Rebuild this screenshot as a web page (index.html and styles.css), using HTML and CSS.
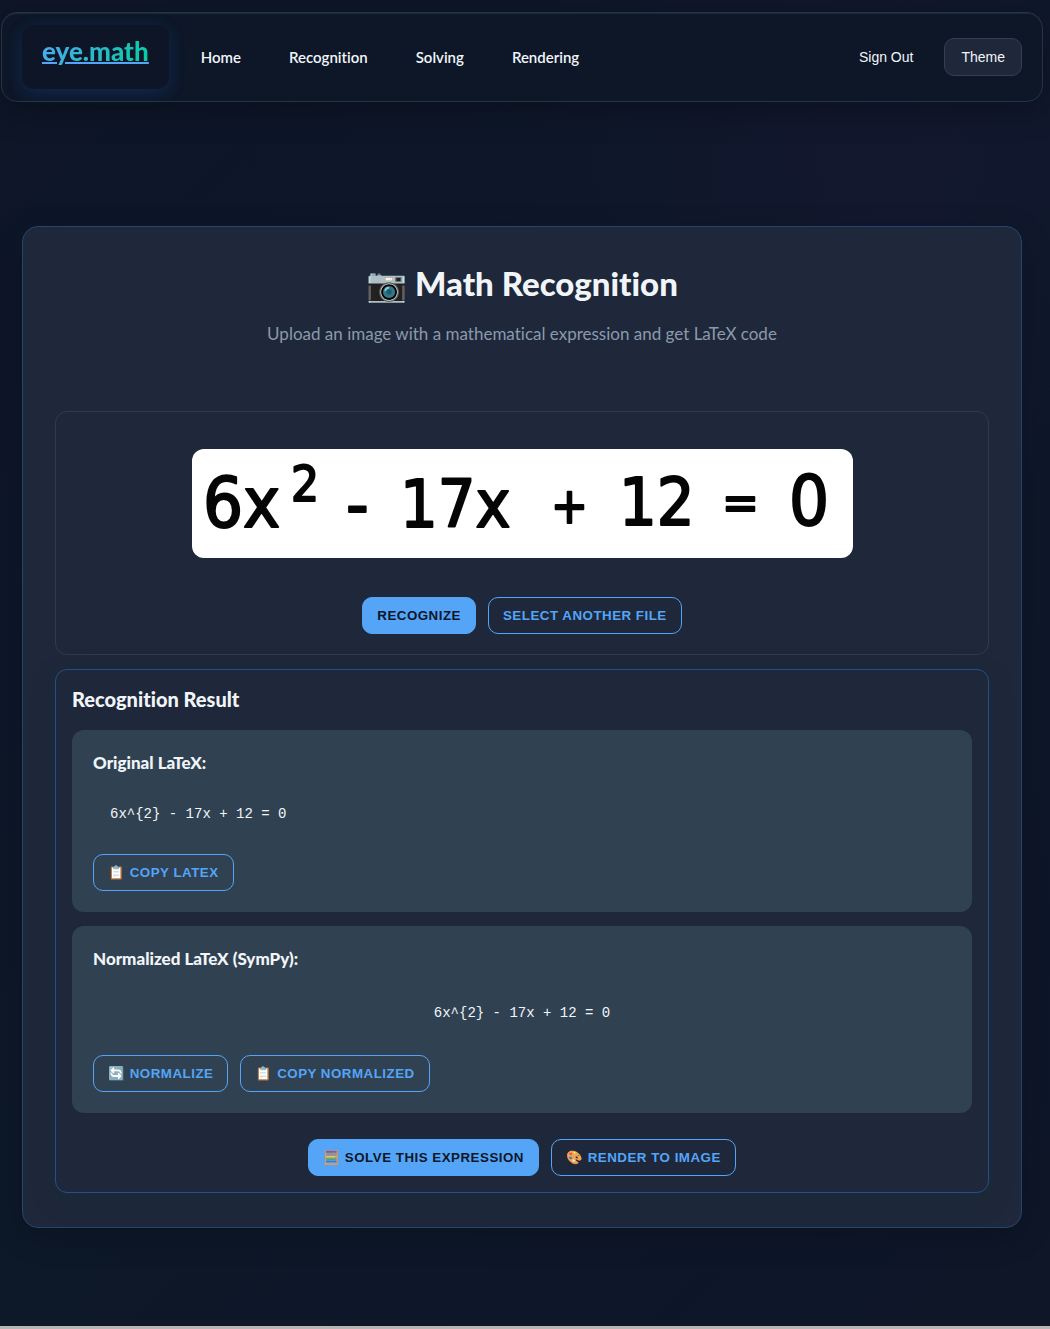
FILE: index.html
```html
<!DOCTYPE html>
<html lang="en">
<head>
  <meta charset="utf-8">
  <meta name="viewport" content="width=device-width, initial-scale=1">
  <title>eye.math – Math Recognition</title>
  <link rel="stylesheet" href="styles.css">
</head>
<body>
  <header class="navbar">
    <a class="brand" href="#"><span class="brand-text">eye.math</span></a>
    <nav class="nav-links" aria-label="Main">
      <a href="#">Home</a>
      <a href="#">Recognition</a>
      <a href="#">Solving</a>
      <a href="#">Rendering</a>
    </nav>
    <div class="nav-actions">
      <button class="nav-btn" type="button">Sign Out</button>
      <button class="nav-btn nav-btn-filled" type="button">Theme</button>
    </div>
  </header>

  <main class="card">
    <div class="card-header">
      <h1>📷 Math Recognition</h1>
      <p>Upload an image with a mathematical expression and get LaTeX code</p>
    </div>

    <section class="upload" aria-label="Uploaded image">
      <svg class="preview" viewBox="0 0 661 109" role="img" aria-label="6x² - 17x + 12 = 0">
        <g class="ink">
          <text x="11" y="78">6x</text>
          <text class="ink-sup" x="99" y="52">2</text>
          <text x="154" y="79">-</text>
          <text class="ink-narrow" x="208" y="78">17x</text>
          <text class="ink-sign" x="359" y="74">+</text>
          <text class="ink-narrow" x="427" y="76">12</text>
          <text class="ink-sign" x="530" y="71">=</text>
          <text x="597" y="76">0</text>
        </g>
      </svg>
      <div class="actions centered">
        <button class="btn btn-primary" type="button">Recognize</button>
        <button class="btn" type="button">Select another file</button>
      </div>
    </section>

    <section class="result">
      <h2>Recognition Result</h2>
      <article class="panel">
        <h3>Original LaTeX:</h3>
        <code class="code">6x^{2} - 17x + 12 = 0</code>
        <div class="actions">
          <button class="btn" type="button">📋 Copy LaTeX</button>
        </div>
      </article>
      <article class="panel">
        <h3>Normalized LaTeX (SymPy):</h3>
        <code class="code code-centered">6x^{2} - 17x + 12 = 0</code>
        <div class="actions">
          <button class="btn" type="button">🔄 Normalize</button>
          <button class="btn" type="button">📋 Copy normalized</button>
        </div>
      </article>
      <div class="actions centered result-actions">
        <button class="btn btn-primary" type="button">🧮 Solve this expression</button>
        <button class="btn" type="button">🎨 Render to image</button>
      </div>
    </section>
  </main>
</body>
</html>
```
FILE: styles.css
```css
* {
  box-sizing: border-box;
}

html {
  min-height: 100%;
  background: #0e1628;
}

body {
  display: flex;
  flex-direction: column;
  min-height: 100vh;
  margin: 0;
  padding: 12px 7px 0 1px;
  border-bottom: 3px solid #b5b5b8;
  background:
    radial-gradient(circle at 85% 12%, rgba(60, 20, 90, 0.12), transparent 380px),
    linear-gradient(135deg, #0e1628, #0d1829 50%, #0e1628);
  color: #f1f5f9;
  font-family: Lato, "Liberation Sans", sans-serif;
  font-variant-ligatures: none;
}

h1,
h2,
h3,
p {
  margin: 0;
}

.navbar {
  display: flex;
  align-items: center;
  height: 90px;
  padding: 0 20px;
  border: 1px solid #253442;
  border-radius: 16px;
  background: #0d1728;
  box-shadow: 0 8px 32px rgba(0, 0, 0, 0.3), inset 0 1px 0 #1c2b3a;
}

.brand {
  height: 64px;
  padding: 12px 20px;
  border-radius: 12px;
  background: #0e1527;
  box-shadow: 0 4px 16px rgba(30, 90, 180, 0.28);
  color: #54a5f7;
  font-size: 26px;
  font-weight: 900;
  line-height: 28px;
  text-decoration: underline;
  text-decoration-thickness: 2px;
}

.brand-text {
  background: linear-gradient(135deg, #54a5f7, #00d09c);
  background-clip: text;
  -webkit-text-fill-color: transparent;
}

.nav-links {
  display: flex;
  gap: 48px;
  margin-left: 32px;
}

.nav-links a {
  color: #f1f5f9;
  font-size: 15px;
  font-weight: 600;
  line-height: 20px;
  text-decoration: none;
}

.nav-actions {
  display: flex;
  gap: 14px;
  margin-left: auto;
}

.nav-btn {
  height: 38px;
  padding: 0 16px;
  border: 1px solid transparent;
  border-radius: 10px;
  background: transparent;
  color: #f1f5f9;
  font: 14px "Liberation Sans", Arial, sans-serif;
}

.nav-btn-filled {
  border-color: #304152;
  background: #1e283a;
}

.card {
  margin: 124px 21px 98px;
  padding: 32px 32px 34px;
  border: 1px solid #234573;
  border-radius: 16px;
  background: #1e283a;
  box-shadow: 0 8px 32px rgba(0, 0, 0, 0.2);
}

.card-header {
  padding-bottom: 64px;
  text-align: center;
}

h1 {
  font-size: 33px;
  font-weight: 900;
  line-height: 48px;
}

.card-header p {
  margin-top: 14px;
  color: #8a9aac;
  font-size: 17px;
  line-height: 26px;
}

.upload {
  padding: 37px 16px 20px;
  border: 1px solid #2d3d4e;
  border-radius: 12px;
}

.preview {
  display: block;
  width: 100%;
  max-width: 661px;
  margin: 0 auto 39px;
  border-radius: 12px;
  background: #fff;
}

.ink {
  fill: #050505;
  stroke: #050505;
  stroke-width: 2;
  stroke-linejoin: round;
  font-family: "DejaVu Sans Condensed", "DejaVu Sans", sans-serif;
  font-size: 70px;
}

.ink-narrow {
  font-size: 66px;
}

.ink-sup,
.ink-sign {
  font-size: 49px;
}

.actions {
  display: flex;
  flex-wrap: wrap;
  gap: 12px;
}

.centered {
  justify-content: center;
}

/* Buttons keep the browser's own control text size. */
.btn {
  height: 37px;
  padding: 0 14px;
  border: 1px solid #54a5f7;
  border-radius: 10px;
  background: transparent;
  color: #54a5f7;
  font-family: "Liberation Sans", Arial, sans-serif;
  font-weight: bold;
  letter-spacing: 0.5px;
  text-transform: uppercase;
}

.btn-primary {
  background: #54a5f7;
  color: #0e1628;
}

.result {
  margin-top: 14px;
  padding: 16px;
  border: 1px solid #235089;
  border-radius: 12px;
  box-shadow: 0 8px 24px rgba(20, 45, 45, 0.25);
}

h2 {
  margin-bottom: 18px;
  font-size: 20px;
  font-weight: 900;
  line-height: 26px;
}

.panel {
  margin-bottom: 14px;
  padding: 20px 21px 21px;
  border-radius: 12px;
  background: #304152;
}

h3 {
  font-size: 17px;
  font-weight: 900;
  line-height: 26px;
}

.code {
  display: block;
  padding: 28px 17px 30px;
  font: 14px/20px "Liberation Mono", "Courier New", monospace;
}

.code-centered {
  padding: 31px 17px 32px;
  text-align: center;
}

.result-actions {
  margin-top: 26px;
}
```
